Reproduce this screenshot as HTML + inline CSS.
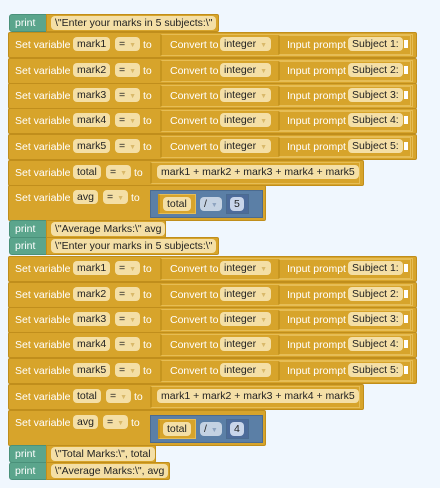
<!DOCTYPE html>
<html><head><meta charset="utf-8"><style>
body{margin:0;width:440px;height:488px;background:#f0f7fe;position:relative;overflow:hidden;font-family:"Liberation Sans",Arial,sans-serif;font-size:10.5px;}
.b{position:absolute;background:#d7a42b;border:1px solid #c08e1c;box-sizing:border-box;border-radius:2px;}
.in{position:absolute;background:#d7a42b;border:1px solid #e6bd55;box-sizing:border-box;border-left:2px solid #c6951f;}
.t{position:absolute;color:#fff;white-space:nowrap;line-height:12px;}
.f{position:absolute;background:#f4dfa6;color:#222;border-radius:4px;height:14px;line-height:14px;padding:0 4px;white-space:nowrap;box-sizing:border-box;}
.p{position:absolute;background:#5ba58c;border:1px solid #4a917a;box-sizing:border-box;border-radius:3px 0 0 3px;}
.dd{color:#d9b96a;font-size:7px;margin-left:4px;}
.bl{position:absolute;background:#5b7fa6;border:1px solid #4b6b90;box-sizing:border-box;}
.nt{position:absolute;background:#fff;width:4px;height:8px;}
</style></head><body>

<!-- SET 1 -->
<div class="p" style="left:9px;top:14px;width:40px;height:18px"></div><div class="t" style="left:15px;top:17px">print</div>
<div class="b" style="left:46px;top:14px;width:173px;height:18px;border-radius:0 2px 2px 0"></div>
<div class="f" style="left:51px;top:16px">\"Enter your marks in 5 subjects:\"</div>

<div id="rows"></div>

<script>
function row(top,n,s){
 return `<div class="b" style="left:8px;top:${top}px;width:409px;height:26px"></div>
<div class="t" style="left:15px;top:${top+7}px">Set variable</div>
<div class="f" style="left:73px;top:${top+5}px">${n}</div>
<div class="f" style="left:115px;top:${top+5}px">=<span class="dd">▼</span></div>
<div class="t" style="left:143px;top:${top+7}px">to</div>
<div class="in" style="left:160px;top:${top+2}px;width:253px;height:22px"></div>
<div class="t" style="left:170px;top:${top+7}px">Convert to</div>
<div class="f" style="left:220px;top:${top+5}px">integer<span class="dd">▼</span></div>
<div class="in" style="left:278px;top:${top+3}px;width:133px;height:20px"></div>
<div class="t" style="left:287px;top:${top+7}px">Input prompt</div>
<div class="f" style="left:348px;top:${top+5}px">Subject ${s}:</div>
<div class="nt" style="left:404px;top:${top+8}px"></div>`;
}
function total(top){
 return `<div class="b" style="left:8px;top:${top}px;width:356px;height:26px"></div>
<div class="t" style="left:15px;top:${top+7}px">Set variable</div>
<div class="f" style="left:73px;top:${top+5}px">total</div>
<div class="f" style="left:106px;top:${top+5}px">=<span class="dd">▼</span></div>
<div class="t" style="left:134px;top:${top+7}px">to</div>
<div class="in" style="left:150px;top:${top+2}px;width:210px;height:22px"></div>
<div class="f" style="left:157px;top:${top+5}px">mark1 + mark2 + mark3 + mark4 + mark5</div>`;
}
function avg(top,d){
 return `<div class="b" style="left:8px;top:${top}px;width:258px;height:36px"></div>
<div class="t" style="left:15px;top:${top+7}px">Set variable</div>
<div class="f" style="left:73px;top:${top+5}px">avg</div>
<div class="f" style="left:103px;top:${top+5}px">=<span class="dd">▼</span></div>
<div class="t" style="left:131px;top:${top+7}px">to</div>
<div class="bl" style="left:150px;top:${top+5}px;width:113px;height:28px"></div>
<div class="in" style="left:158px;top:${top+9}px;width:38px;height:20px"></div>
<div class="f" style="left:163px;top:${top+12}px">total</div>
<div class="f" style="left:200px;top:${top+12}px;background:#c4d2e2">/<span class="dd" style="color:#8ea4c0">▼</span></div>
<div class="bl" style="left:226px;top:${top+9}px;width:23px;height:20px;background:#4d6b9a"></div>
<div class="f" style="left:230px;top:${top+12}px;background:#c9d5ea">${d}</div>`;
}
function pr(top,txt,w){
 return `<div class="p" style="left:9px;top:${top}px;width:40px;height:18px"></div><div class="t" style="left:15px;top:${top+3}px">print</div>
<div class="b" style="left:46px;top:${top}px;width:${w}px;height:18px;border-radius:0 2px 2px 0"></div>
<div class="f" style="left:51px;top:${top+2}px">${txt}</div>`;
}
let h='';
let t=[32,58,83,108,134];
t.forEach((y,i)=>h+=row(y,'mark'+(i+1),i+1));
h+=total(160);
h+=avg(185,'5');
h+=pr(220,'\\"Average Marks:\\" avg',120);
h+=pr(237,'\\"Enter your marks in 5 subjects:\\"',173);
let t2=[256,282,307,332,358];
t2.forEach((y,i)=>h+=row(y,'mark'+(i+1),i+1));
h+=total(384);
h+=avg(410,'4');
h+=pr(445,'\\"Total Marks:\\", total',110);
h+=pr(462,'\\"Average Marks:\\", avg',124);
document.getElementById('rows').innerHTML=h;
</script>
</body></html>
